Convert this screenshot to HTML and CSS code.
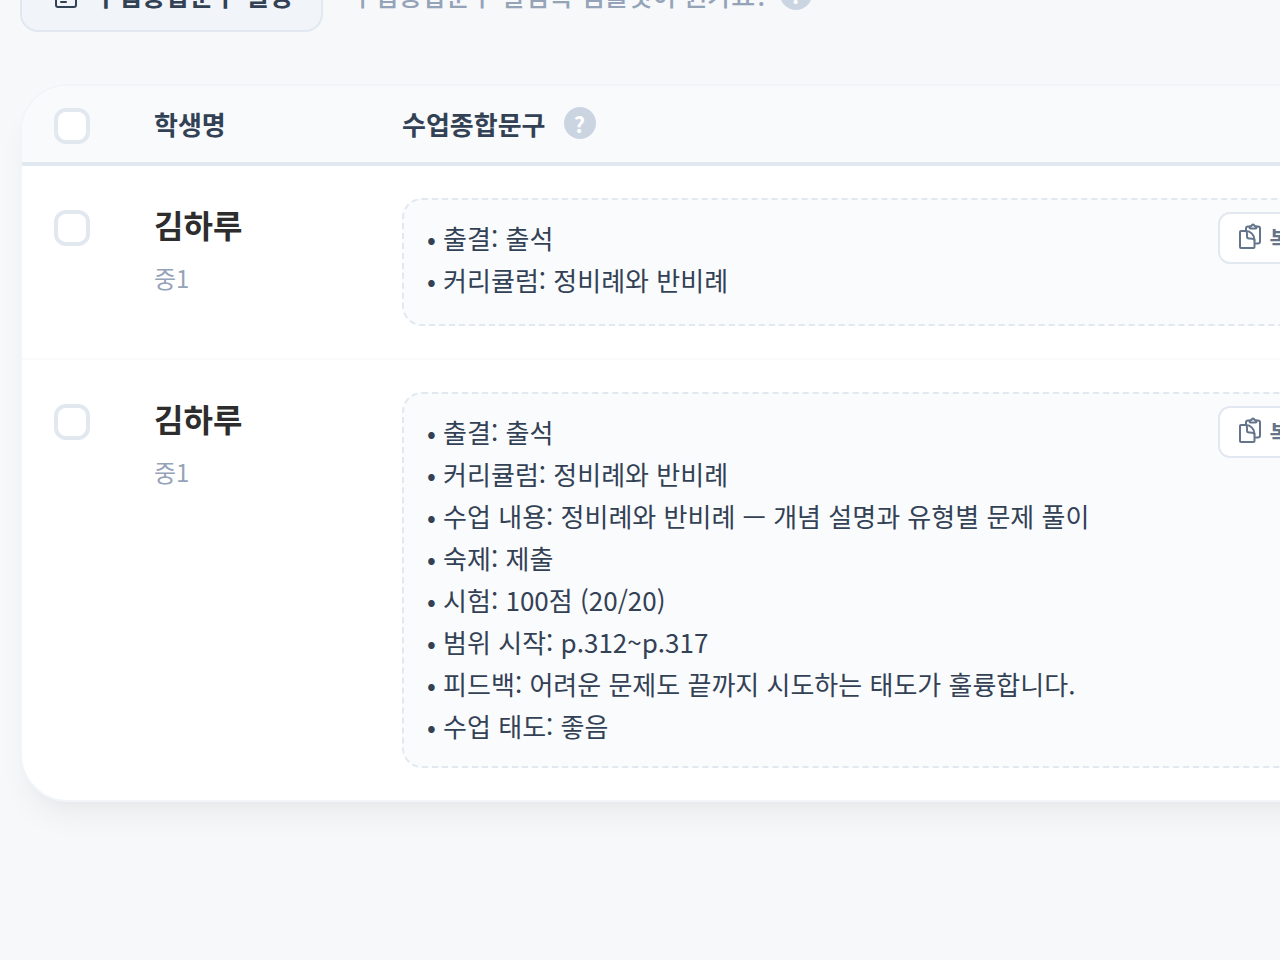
FILE: index.html
```html
<!DOCTYPE html>
<html lang="ko">
<head>
    <meta charset="UTF-8">
    <meta name="viewport" content="width=device-width, initial-scale=1.0">
    <title>수업종합문구</title>
    <link rel="stylesheet" href="styles.css">
</head>
<body>
    <div class="toolbar">
        <button type="button" class="settings-btn">
            <svg class="settings-icon" viewBox="0 0 28 32" fill="none" stroke="currentColor" stroke-width="2" stroke-linecap="round" stroke-linejoin="round">
                <rect x="4" y="4" width="20" height="25" rx="2"/>
                <path d="M4 11h20M9 17h10M9 24h5"/>
            </svg>
            수업종합문구 설정
        </button>
        <span class="toolbar-hint">수업종합문구 알림톡 템플릿이 뭔가요?</span>
        <button type="button" class="help" aria-label="도움말">?</button>
    </div>

    <div class="card">
        <table class="student-table">
            <thead>
                <tr>
                    <th class="col-check"><input type="checkbox" class="check" aria-label="전체 선택"></th>
                    <th class="col-name">학생명</th>
                    <th><div class="head-label">수업종합문구 <button type="button" class="help" aria-label="도움말">?</button></div></th>
                </tr>
            </thead>
            <tbody>
                <tr>
                    <td class="col-check"><input type="checkbox" class="check" aria-label="김하루 선택"></td>
                    <td class="col-name">
                        <div class="name">김하루</div>
                        <div class="grade">중1</div>
                    </td>
                    <td>
                        <div class="summary">
                            <div>• 출결: 출석</div>
                            <div>• 커리큘럼: 정비례와 반비례</div>
                            <button type="button" class="copy-btn">
                                <svg class="copy-icon" viewBox="0 0 24 28" fill="none" stroke="currentColor" stroke-width="2" stroke-linecap="round" stroke-linejoin="round">
                                    <path d="M8 7V5.500a2 2 0 0 1 2-2h2M18 3.500h2a2 2 0 0 1 2 2v13a2 2 0 0 1-2 2h-3"/>
                                    <path d="M11.500 4.500c0-1 1-1.500 2-1.500.3-1 1-1.500 1.500-1.500s1.200.5 1.500 1.500c1 0 2 .5 2 1.500 0 .8-.5 1-1 1h-5c-.5 0-1-.2-1-1z"/>
                                    <path d="M3.500 8H8c4.500 0 8.500 4 8.500 9v7a1 1 0 0 1-1 1H3a1 1 0 0 1-1-1V9a1 1 0 0 1 1-1z"/>
                                    <path d="M8 8c1.500 1 1 3 1 5.500a2 2 0 0 0 2 2c2.500 0 4.500-.2 5.500 1.500"/>
                                </svg>
                                복사
                            </button>
                        </div>
                    </td>
                </tr>
                <tr>
                    <td class="col-check"><input type="checkbox" class="check" aria-label="김하루 선택"></td>
                    <td class="col-name">
                        <div class="name">김하루</div>
                        <div class="grade">중1</div>
                    </td>
                    <td>
                        <div class="summary">
                            <div>• 출결: 출석</div>
                            <div>• 커리큘럼: 정비례와 반비례</div>
                            <div>• 수업 내용: 정비례와 반비례 — 개념 설명과 유형별 문제 풀이</div>
                            <div>• 숙제: 제출</div>
                            <div>• 시험: 100점 (20/20)</div>
                            <div>• 범위 시작: p.312~p.317</div>
                            <div>• 피드백: 어려운 문제도 끝까지 시도하는 태도가 훌륭합니다.</div>
                            <div>• 수업 태도: 좋음</div>
                            <button type="button" class="copy-btn">
                                <svg class="copy-icon" viewBox="0 0 24 28" fill="none" stroke="currentColor" stroke-width="2" stroke-linecap="round" stroke-linejoin="round">
                                    <path d="M8 7V5.500a2 2 0 0 1 2-2h2M18 3.500h2a2 2 0 0 1 2 2v13a2 2 0 0 1-2 2h-3"/>
                                    <path d="M11.500 4.500c0-1 1-1.500 2-1.500.3-1 1-1.500 1.500-1.500s1.200.5 1.500 1.500c1 0 2 .5 2 1.500 0 .8-.5 1-1 1h-5c-.5 0-1-.2-1-1z"/>
                                    <path d="M3.500 8H8c4.500 0 8.500 4 8.500 9v7a1 1 0 0 1-1 1H3a1 1 0 0 1-1-1V9a1 1 0 0 1 1-1z"/>
                                    <path d="M8 8c1.500 1 1 3 1 5.500a2 2 0 0 0 2 2c2.500 0 4.500-.2 5.500 1.500"/>
                                </svg>
                                복사
                            </button>
                        </div>
                    </td>
                </tr>
            </tbody>
        </table>
    </div>
</body>
</html>
```
FILE: styles.css
```css
* { box-sizing: border-box; }
body { min-height: 100vh; margin: 0; padding: 0 20px; overflow-x: hidden; background-color: #f7f8fa; color: #334155; font-family: "Noto Sans CJK KR", sans-serif; font-size: 26px; }
button { font-family: inherit; cursor: pointer; }

/* toolbar is scrolled partly out of view */
.toolbar { display: flex; align-items: center; margin-top: -44px; margin-bottom: 52px; }
.settings-btn { display: flex; align-items: center; gap: 14px; height: 76px; padding: 0 28px 0 30px; border: 2px solid #e2e8f0; border-radius: 18px; background-color: #f1f5f9; color: #334155; font-size: 26px; font-weight: bold; }
.settings-icon { width: 28px; height: 32px; }
.toolbar-hint { margin: 0 12px 0 28px; color: #94a3b8; font-size: 26px; font-weight: 500; }
.help { display: flex; align-items: center; justify-content: center; width: 32px; height: 32px; padding: 0; border: none; border-radius: 50%; background-color: #cbd5e1; color: white; font-size: 22px; font-weight: bold; line-height: 32px; }

/* the card runs past the right edge of the window */
.card { margin-right: -118px; border: 2px solid #f1f5f9; border-radius: 48px; background-color: white; box-shadow: 0 20px 30px -6px rgba(0, 0, 0, 0.05), 0 8px 12px -4px rgba(0, 0, 0, 0.02); overflow: hidden; }
.student-table { width: 100%; border-collapse: separate; border-spacing: 0; }
th { height: 80px; padding: 0 32px 2px; border-bottom: 4px solid #e2e8f0; background-color: #f8fafc; text-align: left; font-weight: bold; }
td { padding: 32px; vertical-align: top; }
tbody tr:first-child td { border-bottom: 2px solid #f8fafc; }
.col-check { width: 100px; }
.col-name { width: 248px; }
.head-label { display: flex; align-items: center; gap: 18px; }
.check { appearance: none; display: block; width: 36px; height: 36px; margin: 0; border: 4px solid #e2e8f0; border-radius: 12px; background-color: white; }
td .check { margin-top: 12px; }
th .check { margin-top: 6px; }
.name { color: #2d2d2d; font-size: 32px; font-weight: bold; line-height: 52px; }
.grade { color: #94a3b8; font-size: 24px; line-height: 56px; }

.summary { position: relative; min-height: 128px; padding: 17px 22px 19px 23px; border: 2px dashed #e2e8f0; border-radius: 20px; background-color: #fafbfd; line-height: 42px; }
.copy-btn { position: absolute; top: 12px; right: 12px; display: flex; align-items: center; gap: 8px; height: 52px; padding: 0 18px 2px; border: 2px solid #e2e8f0; border-radius: 12px; background-color: white; color: #64748b; font-size: 22px; font-weight: bold; }
.copy-icon { width: 24px; height: 28px; }
```
